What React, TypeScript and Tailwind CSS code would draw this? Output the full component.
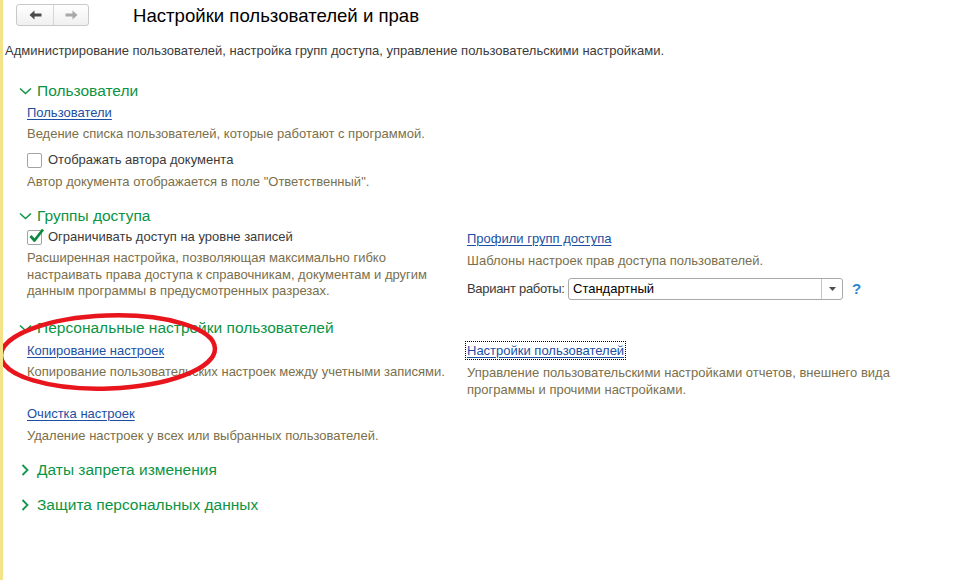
import { ReactNode } from "react";

const linkCls = "text-[#1c4fa3] underline underline-offset-2 decoration-1";
const noteCls = "text-[#7a6f4c]";

const ChevronDown = () => (
  <svg width="13" height="8" viewBox="0 0 13 8" className="shrink-0">
    <path d="M1 1.5 L6.5 6.5 L12 1.5" fill="none" stroke="#10964a" strokeWidth="1.6" />
  </svg>
);

const ChevronRight = () => (
  <svg width="8" height="12" viewBox="0 0 8 12" className="shrink-0">
    <path d="M1.5 1 L6.5 6 L1.5 11" fill="none" stroke="#10964a" strokeWidth="1.8" />
  </svg>
);

type SectionProps = { title: string; open?: boolean; className?: string };

const SectionHeader = ({ title, open = true, className }: SectionProps) => (
  <div className={`flex items-center h-[20px] text-[15.5px] leading-[20px] text-[#0b9444] ${className ?? ""}`}>
    <div className={open ? "w-[34px] pl-[16px] flex" : "w-[34px] pl-[18px] flex"}>
      {open ? <ChevronDown /> : <ChevronRight />}
    </div>
    <span>{title}</span>
  </div>
);

const Checkbox = ({ checked, label }: { checked?: boolean; label: string }) => (
  <div className="flex items-center h-[16px] leading-[16px]">
    <div className="relative w-[15px] h-[15px] rounded-[2px] border border-[#a3a3a3] bg-white">
      {checked && (
        <svg width="17" height="17" viewBox="0 0 17 17" className="absolute left-[0px] top-[-4px]">
          <path d="M2.5 9 L6.5 13.5 L15 2.5" fill="none" stroke="#0e8a3e" strokeWidth="2.8" strokeLinejoin="round" />
        </svg>
      )}
    </div>
    <span className="ml-[6px] text-[#3a3a3a]">{label}</span>
  </div>
);

const Line = ({ children, className }: { children: ReactNode; className?: string }) => (
  <div className={`h-[16px] leading-[16px] whitespace-nowrap ${className ?? ""}`}>{children}</div>
);

const NavButtons = () => (
  <div className="flex h-[22px] w-[73px] rounded-[3px] border border-[#c9c9c9] bg-gradient-to-b from-white to-[#f0f0f0]">
    <div className="flex w-[37px] items-center justify-center border-r border-[#d6d6d6]">
      <svg width="13" height="10" viewBox="0 0 13 10">
        <path d="M0.5 5 L5.5 0.5 L5.5 3.5 L12.5 3.5 L12.5 6.5 L5.5 6.5 L5.5 9.5 Z" fill="#4a4a4a" />
      </svg>
    </div>
    <div className="flex flex-1 items-center justify-center">
      <svg width="13" height="10" viewBox="0 0 13 10">
        <path d="M12.5 5 L7.5 0.5 L7.5 3.5 L0.5 3.5 L0.5 6.5 L7.5 6.5 L7.5 9.5 Z" fill="#a8a8a8" />
      </svg>
    </div>
  </div>
);

export default function App() {
  return (
    <div
      className="relative w-[972px] h-[580px] overflow-hidden bg-white border-l-[3px] border-[#f5e38a] text-[13px] text-[#333]"
      style={{ fontFamily: '"Liberation Sans", Arial, sans-serif' }}
    >
      {/* top bar */}
      <div className="flex items-center pt-[4px] h-[26px]">
        <div className="ml-[13px]">
          <NavButtons />
        </div>
        <h1 className="ml-[44px] mt-[2px] text-[18.6px] leading-[22px] text-black">Настройки пользователей и прав</h1>
      </div>

      <Line className="mt-[17px] ml-[2px] text-[#3b3b3b]">
        Администрирование пользователей, настройка групп доступа, управление пользовательскими настройками.
      </Line>

      {/* Пользователи */}
      <SectionHeader title="Пользователи" className="mt-[22px]" />
      <div className="pl-[24px]">
        <Line className="mt-[4px]">
          <a className={linkCls}>Пользователи</a>
        </Line>
        <Line className={`mt-[5px] ${noteCls}`}>Ведение списка пользователей, которые работают с программой.</Line>
        <div className="mt-[10px]">
          <Checkbox label="Отображать автора документа" />
        </div>
        <Line className={`mt-[6px] ${noteCls}`}>Автор документа отображается в поле "Ответственный".</Line>
      </div>

      {/* Группы доступа */}
      <SectionHeader title="Группы доступа" className="mt-[16px]" />
      <div className="flex pl-[24px]">
        <div className="w-[440px]">
          <div className="mt-[3px]">
            <Checkbox checked label="Ограничивать доступ на уровне записей" />
          </div>
          <div className={`mt-[5px] leading-[16.5px] ${noteCls}`}>
            Расширенная настройка, позволяющая максимально гибко
            <br />
            настраивать права доступа к справочникам, документам и другим
            <br />
            данным программы в предусмотренных разрезах.
          </div>
        </div>
        <div>
          <Line className="mt-[5px]">
            <a className={linkCls}>Профили групп доступа</a>
          </Line>
          <Line className={`mt-[6px] ${noteCls}`}>Шаблоны настроек прав доступа пользователей.</Line>
          <div className="mt-[9px] flex items-center h-[22px]">
            <span className="text-[#3a3a3a] w-[101px] shrink-0 whitespace-nowrap tracking-[-0.3px]">Вариант работы:</span>
            <div className="flex h-[22px] w-[275px] shrink-0 rounded-[3px] border border-[#a9a9a9] bg-white">
              <div className="flex-1 pl-[4px] leading-[20px] text-black">Стандартный</div>
              <div className="flex w-[21px] items-center justify-center border-l border-[#c4c4c4]">
                <svg width="7" height="4" viewBox="0 0 7 4">
                  <path d="M0 0 L7 0 L3.5 4 Z" fill="#4d4d4d" />
                </svg>
              </div>
            </div>
            <span className="ml-[9px] text-[15px] font-bold text-[#2a86cf]">?</span>
          </div>
        </div>
      </div>

      {/* Персональные настройки */}
      <SectionHeader title="Персональные настройки пользователей" className="mt-[18px]" />
      <div className="flex pl-[24px]">
        <div className="w-[440px]">
          <Line className="mt-[5px]">
            <a className={linkCls}>Копирование настроек</a>
          </Line>
          <Line className={`mt-[5px] ${noteCls}`}>Копирование пользовательских настроек между учетными записями.</Line>
          <Line className="mt-[26px]">
            <a className={linkCls}>Очистка настроек</a>
          </Line>
          <Line className={`mt-[6px] ${noteCls}`}>Удаление настроек у всех или выбранных пользователей.</Line>
        </div>
        <div>
          <Line className="mt-[5px]">
            <a className={`${linkCls} outline outline-1 outline-dotted outline-black outline-offset-[1px]`}>
              Настройки пользователей
            </a>
          </Line>
          <div className={`mt-[5px] leading-[17px] ${noteCls}`}>
            Управление пользовательскими настройками отчетов, внешнего вида
            <br />
            программы и прочими настройками.
          </div>
        </div>
      </div>

      <SectionHeader title="Даты запрета изменения" open={false} className="mt-[16px]" />
      <SectionHeader title="Защита персональных данных" open={false} className="mt-[15px]" />

      {/* red hand-drawn ellipse annotation */}
      <svg
        width="230"
        height="100"
        viewBox="0 0 230 100"
        className="pointer-events-none absolute left-[-7px] top-[302px]"
      >
        <ellipse
          cx="112"
          cy="50"
          rx="107"
          ry="36.5"
          fill="none"
          stroke="#e8151d"
          strokeWidth="4.5"
          transform="rotate(-2 112 50)"
        />
      </svg>
    </div>
  );
}
